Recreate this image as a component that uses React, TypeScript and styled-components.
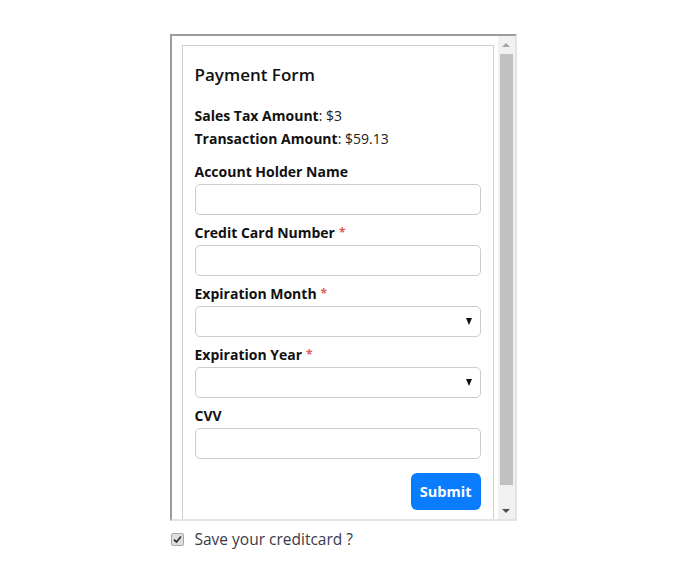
import styled, { createGlobalStyle } from "styled-components";

const GlobalStyle = createGlobalStyle`
  body {
    margin: 0;
    background: #ffffff;
    font-family: "Open Sans", "Liberation Sans", sans-serif;
    color: #111;
  }
`;

const Page = styled.div`
  width: 347px;
  margin: 34px auto 0;
`;

const Frame = styled.div`
  box-sizing: border-box;
  display: flex;
  width: 347px;
  height: 487px;
  border-style: solid;
  border-width: 2px;
  border-color: #9c9c9c #e4e4e4 #e4e4e4 #9c9c9c;
  background: #fff;
`;

const Viewport = styled.div`
  flex: 1;
  min-width: 0;
  overflow: hidden;
`;

const Inner = styled.div`
  padding: 9px 4px 24px 10px;
`;

// drawn scrollbar, as the frame shows it
const ScrollTrack = styled.div`
  width: 17px;
  flex: none;
  display: flex;
  flex-direction: column;
  background: #f1f1f1;
`;

const ArrowButton = styled.div<{ $down?: boolean; $enabled?: boolean }>`
  height: 17px;
  flex: none;
  display: flex;
  align-items: center;
  justify-content: center;

  &::before {
    content: "";
    border-left: 4px solid transparent;
    border-right: 4px solid transparent;
    ${(p) => (p.$down ? "border-top" : "border-bottom")}: 4px solid
      ${(p) => (p.$enabled ? "#505050" : "#a3a3a3")};
  }
`;

const Thumb = styled.div`
  flex: 1;
  margin: 1px 2px 17px;
  background: #c1c1c1;
`;

const Card = styled.div`
  border: 1px solid #cfcfcf;
  padding: 19px 12px 12px;
`;

const Title = styled.h2`
  margin: 0 0 19px;
  font-size: 17px;
  line-height: 20px;
  font-weight: 600;
`;

const Summary = styled.p`
  margin: 0;
  font-size: 14px;
  line-height: 23px;
  color: #222;

  b {
    font-weight: 700;
    color: #111;
  }
`;

const Field = styled.div<{ $first?: boolean }>`
  margin-top: ${(p) => (p.$first ? "11px" : "7px")};
`;

const Label = styled.label`
  display: block;
  font-size: 14px;
  line-height: 22px;
  font-weight: 700;
  margin-bottom: 1px;
`;

const Required = styled.span`
  color: #e05a5a;
  font-size: 12px;
  margin-left: 4px;
  vertical-align: 1px;
`;

const Input = styled.input`
  display: block;
  box-sizing: border-box;
  width: 100%;
  height: 31px;
  border: 1px solid #cccccc;
  border-radius: 5px;
  background: #fff;
  outline: none;
  padding: 0 10px;
  font: inherit;
`;

const SelectWrap = styled.div`
  position: relative;

  &::after {
    content: "";
    position: absolute;
    right: 9px;
    top: 12px;
    border-left: 3.5px solid transparent;
    border-right: 3.5px solid transparent;
    border-top: 7px solid #111;
    pointer-events: none;
  }
`;

const Select = styled.select`
  display: block;
  box-sizing: border-box;
  width: 100%;
  height: 31px;
  border: 1px solid #cccccc;
  border-radius: 5px;
  background: #fff;
  appearance: none;
  outline: none;
  padding: 0 10px;
  font: inherit;
`;

const Actions = styled.div`
  display: flex;
  justify-content: flex-end;
  margin-top: 14px;
`;

const SubmitButton = styled.button`
  height: 37px;
  padding: 0 9px;
  border: none;
  border-radius: 6px;
  background: #0a7dff;
  color: #fff;
  font-family: "Open Sans", "Liberation Sans", sans-serif;
  font-size: 14.5px;
  font-weight: 700;
`;

const SaveRow = styled.label`
  display: flex;
  align-items: center;
  gap: 11px;
  margin-top: 7px;
  padding-left: 1px;
  font-size: 15.5px;
  line-height: 22px;
  color: #3a3a4a;
`;

const CheckBox = styled.span`
  box-sizing: border-box;
  width: 13px;
  height: 13px;
  border: 1px solid #a8a8a8;
  border-radius: 2px;
  background: #dedede;
  display: flex;
  align-items: center;
  justify-content: center;
`;

const fields: { label: string; required?: boolean; kind: "input" | "select" }[] = [
  { label: "Account Holder Name", kind: "input" },
  { label: "Credit Card Number", required: true, kind: "input" },
  { label: "Expiration Month", required: true, kind: "select" },
  { label: "Expiration Year", required: true, kind: "select" },
  { label: "CVV", kind: "input" },
];

export default function App() {
  return (
    <>
      <GlobalStyle />
      <Page>
        <Frame>
          <Viewport>
            <Inner>
              <Card>
                <Title>Payment Form</Title>
                <Summary>
                  <b>Sales Tax Amount</b>: $3
                </Summary>
                <Summary>
                  <b>Transaction Amount</b>: $59.13
                </Summary>
                {fields.map((f, i) => (
                  <Field key={f.label} $first={i === 0}>
                    <Label>
                      {f.label}
                      {f.required && <Required>*</Required>}
                    </Label>
                    {f.kind === "input" ? (
                      <Input type="text" />
                    ) : (
                      <SelectWrap>
                        <Select defaultValue="">
                          <option value=""></option>
                        </Select>
                      </SelectWrap>
                    )}
                  </Field>
                ))}
                <Actions>
                  <SubmitButton type="button">Submit</SubmitButton>
                </Actions>
              </Card>
            </Inner>
          </Viewport>
          <ScrollTrack>
            <ArrowButton />
            <Thumb />
            <ArrowButton $down $enabled />
          </ScrollTrack>
        </Frame>
        <SaveRow>
          <CheckBox>
            <svg width="9" height="9" viewBox="0 0 9 9">
              <path d="M1 4.6 L3.5 7 L8 1.5" fill="none" stroke="#333" strokeWidth="1.8" />
            </svg>
          </CheckBox>
          Save your creditcard ?
        </SaveRow>
      </Page>
    </>
  );
}
